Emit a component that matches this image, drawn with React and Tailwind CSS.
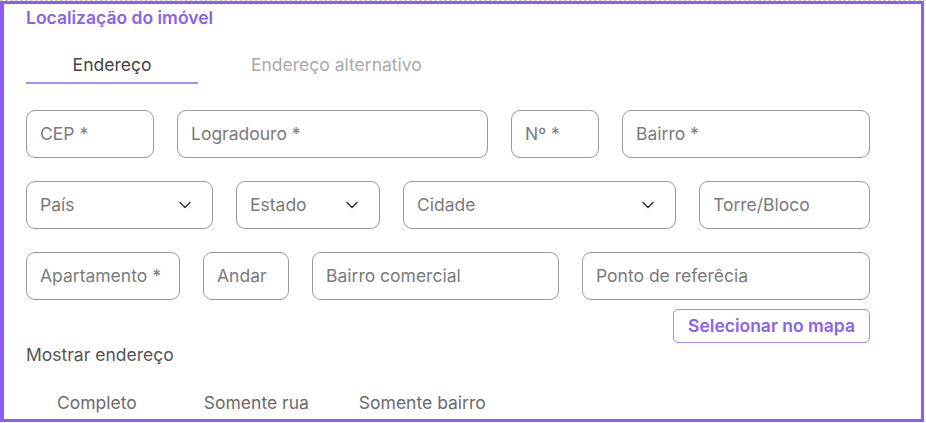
import { ChevronDown } from "lucide-react";

const ROWS = [
  [
    { label: "CEP *", w: "w-[128px]" },
    { label: "Logradouro *", w: "w-[311px]" },
    { label: "Nº *", w: "w-[88px]" },
    { label: "Bairro *", w: "w-[248px]" },
  ],
  [
    { label: "País", w: "w-[187px]", select: true },
    { label: "Estado", w: "w-[144px]", select: true },
    { label: "Cidade", w: "w-[273px]", select: true },
    { label: "Torre/Bloco", w: "w-[171px]" },
  ],
  [
    { label: "Apartamento *", w: "w-[154px]" },
    { label: "Andar", w: "w-[86px]" },
    { label: "Bairro comercial", w: "w-[247px]" },
    { label: "Ponto de referêcia", w: "w-[288px]" },
  ],
];

function Field({ label, w, select }) {
  return (
    <div
      className={`${w} h-[48px] shrink-0 flex items-center justify-between rounded-[9px] border border-[#9a9a9a] pl-[13px] pr-[17px] text-[17.5px] text-[#7b7b7b]`}
    >
      <span className="whitespace-nowrap">{label}</span>
      {select && <ChevronDown size={20} strokeWidth={1.75} className="text-[#333]" />}
    </div>
  );
}

export default function App() {
  return (
    <div
      className="w-[926px] h-[423px] bg-white border-t border-dashed border-[#cfcfcf]"
      style={{ fontFamily: "Inter, 'Noto Sans', sans-serif" }}
    >
      <div className="w-[924px] h-[421px] border-[3px] border-l-4 border-[#8b5cf6] pl-[22px] pr-[50px]">
        <h1 className="mt-[3px] text-[17.5px] leading-[22px] font-semibold text-[#8a63e8]">
          Localização do imóvel
        </h1>

        {/* Tabs */}
        <div className="flex mt-[25px] text-[17.5px] leading-[22px]">
          <div className="w-[172px] text-center text-[#444] pb-[6px] border-b-2 border-[#a78bfa]">
            Endereço
          </div>
          <div className="pl-[53px] text-[#aaaaaa] whitespace-nowrap">Endereço alternativo</div>
        </div>

        {/* Fields */}
        <div className="mt-[26px] flex flex-col gap-[23px]">
          {ROWS.map((row, i) => (
            <div key={i} className="flex gap-[23px]">
              {row.map((f) => (
                <Field key={f.label} {...f} />
              ))}
            </div>
          ))}
        </div>

        <div className="flex justify-end w-[844px] mt-[9px]">
          <button className="h-[34px] px-[14px] rounded-[5px] border border-[#a78bfa] text-[17.5px] font-semibold text-[#8a63e8] whitespace-nowrap">
            Selecionar no mapa
          </button>
        </div>

        <div className="mt-[1px] text-[17.5px] leading-[22px] text-[#555]">Mostrar endereço</div>

        <div className="flex mt-[26px] text-[17.5px] leading-[22px] text-[#6b6b6b]">
          <span className="ml-[31px]">Completo</span>
          <span className="ml-[67px]">Somente rua</span>
          <span className="ml-[50px]">Somente bairro</span>
        </div>
      </div>
    </div>
  );
}
